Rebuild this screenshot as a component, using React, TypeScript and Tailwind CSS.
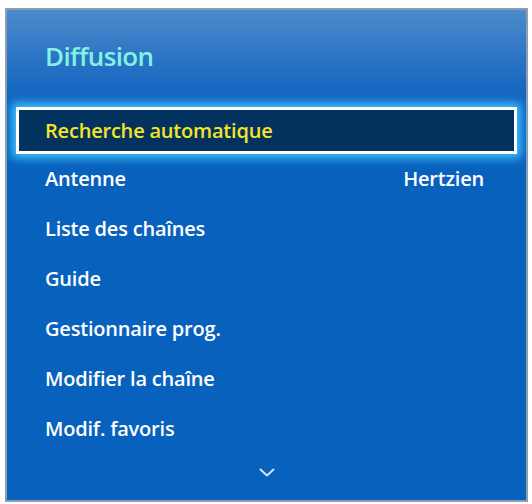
import React from 'react';

const items = [
    { label: 'Antenne', value: 'Hertzien' },
    { label: 'Liste des chaînes' },
    { label: 'Guide' },
    { label: 'Gestionnaire prog.' },
    { label: 'Modifier la chaîne' },
    { label: 'Modif. favoris' },
];

export default function App() {
    return (
        <div
            className="w-[532px] h-[504px] bg-white pt-[8px] pl-[5px]"
            style={{ fontFamily: '"Open Sans", "Noto Sans", sans-serif' }}
        >
            <div className="w-[523px] h-[494px] border-2 border-[#8d9db2] flex flex-col bg-[linear-gradient(to_bottom,#4c8bcb_0px,#2a73c4_50px,#0c62bf_95px,#0862bd_140px,#0862bd_100%)]">
                {/* Header */}
                <div className="h-[97px] pl-[38px] pt-[30px]">
                    <h1 className="text-[26px] leading-[32px] font-semibold text-[#82f2e2] tracking-[-0.6px]">
                        Diffusion
                    </h1>
                </div>

                {/* Selected row */}
                <div className="mx-[9px] h-[47px] border-[3px] border-white bg-[#03325f] shadow-[0_0_9px_4px_#43c4ff] flex items-center pl-[26px]">
                    <span className="text-[20px] leading-[24px] font-semibold text-[#f6e526] tracking-[-0.2px]">
                        Recherche automatique
                    </span>
                </div>

                {/* Menu rows */}
                <div className="flex flex-col">
                    {items.map(item => (
                        <div key={item.label} className="h-[50px] flex items-center justify-between pl-[38px] pr-[42px]">
                            <span className="text-[20px] leading-[24px] font-semibold text-white tracking-[-0.2px]">
                                {item.label}
                            </span>
                            {item.value && (
                                <span className="text-[20px] leading-[24px] font-semibold text-white tracking-[-0.2px]">
                                    {item.value}
                                </span>
                            )}
                        </div>
                    ))}
                </div>

                {/* Scroll indicator */}
                <div className="h-[36px] flex items-center justify-center">
                    <svg width="16" height="9" viewBox="0 0 16 9" fill="none">
                        <path d="M1.5 1.5 L8 7.5 L14.5 1.5" stroke="#d8e4f2" strokeWidth="2" strokeLinecap="round" strokeLinejoin="round" />
                    </svg>
                </div>
            </div>
        </div>
    );
}
